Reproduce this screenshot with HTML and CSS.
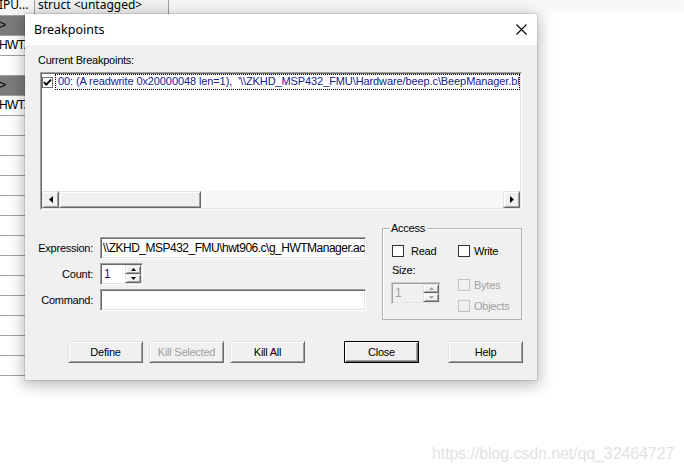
FILE: index.html
```html
<!DOCTYPE html>
<html>
<head>
<meta charset="utf-8">
<title>Breakpoints</title>
<link rel="stylesheet" href="styles.css">
</head>
<body>
<div class="bg">
  <div class="bg-head">
    <div class="hc hc1">IPU...</div>
    <div class="hc hc2">struct &lt;untagged&gt;</div>
    <div class="hc hc3"></div>
  </div>
  <div class="bg-rows">
    <div class="row dark"><span class="rt">&gt;</span></div>
    <div class="row"><span class="rt">HWT...</span></div>
    <div class="row"></div>
    <div class="row dark"><span class="rt">&gt;</span></div>
    <div class="row"><span class="rt">HWT...</span></div>
    <div class="row"></div>
    <div class="row"></div>
    <div class="row"></div>
    <div class="row"></div>
    <div class="row"></div>
    <div class="row"></div>
    <div class="row"></div>
    <div class="row"></div>
    <div class="row"></div>
    <div class="row"></div>
    <div class="row"></div>
    <div class="row"></div>
    <div class="row"></div>
  </div>
</div>

<div class="dialog">
  <div class="titlebar">
    <span class="title">Breakpoints</span>
    <svg class="close" width="11" height="11" viewBox="0 0 11 11"><path d="M0.5 0.5L10.5 10.5M10.5 0.5L0.5 10.5" stroke="#000" stroke-width="1.1" fill="none"/></svg>
  </div>
  <div class="dlg-body">
    <div class="lbl-current">Current Breakpoints:</div>
    <div class="listbox">
      <div class="lb-inner">
        <div class="list-area">
          <div class="item">
            <span class="chk"><svg width="9" height="9" viewBox="0 0 9 9"><path d="M1 4.2L3.3 6.6L8 1.6" stroke="#000" stroke-width="1.8" fill="none"/></svg></span>
            <span class="item-text">00: (A readwrite 0x20000048 len=1),  '\\ZKHD_MSP432_FMU\Hardware/beep.c\BeepManager.bFlag'</span>
          </div>
        </div>
        <div class="hscroll">
          <div class="sb-btn"><svg width="4" height="7" viewBox="0 0 4 7"><path d="M4 0V7L0 3.5Z" fill="#000"/></svg></div>
          <div class="sb-thumb"></div>
          <div class="sb-track"></div>
          <div class="sb-btn"><svg width="4" height="7" viewBox="0 0 4 7"><path d="M0 0V7L4 3.5Z" fill="#000"/></svg></div>
        </div>
      </div>
    </div>

    <div class="lower">
      <div class="form">
        <label class="flbl">Expression:</label>
        <div class="field"><span class="field-text">\\ZKHD_MSP432_FMU\hwt906.c\g_HWTManager.acc</span></div>
        <label class="flbl">Count:</label>
        <div class="spin count">
          <span class="spin-val">1</span>
          <div class="spin-btns">
            <div class="spin-b"><svg width="5" height="3" viewBox="0 0 5 3"><path d="M0 3H5L2.5 0Z" fill="#000"/></svg></div>
            <div class="spin-b"><svg width="5" height="3" viewBox="0 0 5 3"><path d="M0 0H5L2.5 3Z" fill="#000"/></svg></div>
          </div>
        </div>
        <label class="flbl">Command:</label>
        <div class="field"></div>
      </div>

      <fieldset class="access">
        <legend>Access</legend>
        <div class="acc-cols">
          <div class="acc-col col1">
            <div class="cbrow read"><span class="chk"></span>Read</div>
            <div class="size-lbl">Size:</div>
            <div class="spin size disabled">
              <span class="spin-val">1</span>
              <div class="spin-btns">
                <div class="spin-b"><svg width="5" height="3" viewBox="0 0 5 3"><path d="M0 3H5L2.5 0Z" fill="#a0a0a0"/></svg></div>
                <div class="spin-b"><svg width="5" height="3" viewBox="0 0 5 3"><path d="M0 0H5L2.5 3Z" fill="#a0a0a0"/></svg></div>
              </div>
            </div>
          </div>
          <div class="acc-col col2">
            <div class="cbrow"><span class="chk"></span>Write</div>
            <div class="cbrow dis bytes"><span class="chk"></span>Bytes</div>
            <div class="cbrow dis objects"><span class="chk"></span>Objects</div>
          </div>
        </div>
      </fieldset>
    </div>

    <div class="buttons">
      <div class="btn">Define</div>
      <div class="btn dis">Kill Selected</div>
      <div class="btn">Kill All</div>
      <div class="btn default close-btn">Close</div>
      <div class="btn help-btn">Help</div>
    </div>
  </div>
</div>

<div class="watermark">https://blog.csdn.net/qq_32464727</div>
</body>
</html>
```

FILE: styles.css
```css
* { box-sizing: border-box; }

body {
  margin: 0;
  width: 684px;
  height: 472px;
  background: #fff;
  position: relative;
  overflow: hidden;
  font-family: "Liberation Sans", Arial, sans-serif;
  color: #000;
}

/* background table */
.bg { width: 684px; }
.bg-head {
  display: flex;
  height: 16px;
  font-family: "Noto Sans", sans-serif;
  font-size: 12px;
  line-height: 12px;
}
.hc {
  height: 16px;
  white-space: nowrap;
  overflow: hidden;
}
.hc1 {
  width: 35px;
  background: #f7f7f7;
  border-right: 1px solid #a0a0a0;
  border-bottom: 1px solid #a0a0a0;
  text-indent: -1px;
  margin-top: -2px;
  height: 18px;
  padding-top: 1px;
}
.hc2 {
  width: 134px;
  background: #f2f2f2;
  border-right: 1px solid #a0a0a0;
  border-bottom: 1px solid #a0a0a0;
  padding-left: 3px;
  margin-top: -2px;
  height: 18px;
  padding-top: 1px;
}
.hc3 {
  flex: 1;
  background: linear-gradient(#f6f6f6, #fdfdfd);
}
.bg-rows { width: 168px; }
.row {
  height: 20px;
  border-bottom: 1px solid #a0a0a0;
  font-family: "Liberation Sans", sans-serif;
  font-size: 12px;
  letter-spacing: -0.6px;
  line-height: 19px;
  white-space: nowrap;
  overflow: hidden;
}
.row.dark { background: #7b7b7b; }
.rt { margin-left: -1px; }

/* dialog window */
.dialog {
  position: absolute;
  left: 25px;
  top: 14px;
  width: 512px;
  height: 366px;
  background: #f0f0f0;
  box-shadow: 0 0 0 1px rgba(0,0,0,0.10), 0 3px 14px 2px rgba(0,0,0,0.28);
  font-size: 11px;
  line-height: 12px;
  letter-spacing: -0.25px;
}
.titlebar {
  height: 31px;
  background: #fff;
  display: flex;
  align-items: center;
  justify-content: space-between;
  padding: 0 10px 0 9px;
  letter-spacing: 0;
}
.title {
  font-family: "Noto Sans", sans-serif;
  font-size: 12.5px;
  line-height: 16px;
  color: #000;
}
.close { display: block; }

.dlg-body { padding-top: 9px; }
.lbl-current {
  margin-left: 13px;
  height: 13px;
  line-height: 13px;
  color: #000;
}

.listbox {
  margin: 5px 0 0 15px;
  width: 482px;
  height: 138px;
  border: 1px solid;
  border-color: #a0a0a0 #fff #fff #a0a0a0;
}
.lb-inner {
  height: 100%;
  border: 1px solid;
  border-color: #696969 #e3e3e3 #e3e3e3 #696969;
  display: flex;
  flex-direction: column;
  background: #fff;
}
.list-area { flex: 1; background: #fff; }
.item {
  display: flex;
  align-items: center;
  height: 16px;
}
.chk {
  width: 11px;
  height: 11px;
  border: 1px solid #333;
  background: #fff;
  display: inline-flex;
  align-items: center;
  justify-content: center;
  flex: none;
}
.item .chk { border-color: #6f6f6f; margin-right: 2px; }
.item-text {
  flex: 1;
  height: 16px;
  border: 1px dotted #000;
  padding-left: 2px;
  line-height: 13px;
  white-space: pre;
  overflow: hidden;
  color: #14228e;
  letter-spacing: -0.1px;
}

.hscroll {
  height: 17px;
  display: flex;
}
.sb-btn, .sb-thumb, .spin-b, .btn {
  border: 1px solid;
  border-color: #e3e3e3 #696969 #696969 #e3e3e3;
  box-shadow: inset 1px 1px #fff, inset -1px -1px #a0a0a0;
  background: #f0f0f0;
}
.sb-btn {
  width: 17px;
  display: flex;
  align-items: center;
  justify-content: center;
}
.sb-thumb { width: 142px; }
.sb-track {
  flex: 1;
  background: repeating-conic-gradient(#f2f2f2 0 25%, #fdfdfd 0 50%) 0 0 / 2px 2px;
}

/* lower form */
.lower {
  display: flex;
  align-items: flex-start;
  margin-top: 12px;
}
.form {
  width: 357px;
  margin-top: 15px;
  display: grid;
  grid-template-columns: 68px 266px;
  grid-auto-rows: 22px;
  column-gap: 7px;
  row-gap: 4px;
  align-items: center;
}
.flbl { text-align: right; }
.field, .spin {
  height: 22px;
  background: #fff;
  border: 1px solid;
  border-color: #a0a0a0 #fff #fff #a0a0a0;
  box-shadow: inset 1px 1px #696969, inset -1px -1px #e3e3e3;
  overflow: hidden;
  white-space: nowrap;
}
.field { padding: 2px 0 0 2px; }
.field-text {
  font-size: 12px;
  line-height: 16px;
  letter-spacing: -0.5px;
}
.spin {
  display: flex;
  padding: 1px;
}
.spin.count { width: 43px; justify-self: start; }
.spin-val {
  flex: 1;
  font-size: 12px;
  line-height: 18px;
  padding-left: 2px;
  color: #3d1060;
}
.spin-btns {
  width: 16px;
  display: flex;
  flex-direction: column;
}
.spin-b {
  flex: 1;
  display: flex;
  align-items: center;
  justify-content: center;
}
.spin-b svg { display: block; }

/* access group */
.access {
  width: 140px;
  margin: 0;
  padding: 0;
  border: 1px solid #b4b4b4;
  box-shadow: inset 1px 1px #fff;
}
.access legend {
  margin-left: 6px;
  padding: 0 2px;
  font-size: 11px;
  line-height: 12px;
}
.acc-cols {
  display: flex;
  padding: 11px 0 7px 9px;
}
.col1 { width: 66px; }
.cbrow {
  display: flex;
  align-items: center;
  height: 12px;
  line-height: 12px;
}
.cbrow .chk { width: 12px; height: 12px; margin-right: 4px; }
.cbrow.read .chk { margin-right: 7px; }
.cbrow.dis { color: #a0a0a0; }
.cbrow.dis .chk { border-color: #c3c3c3; background: #f0f0f0; }
.size-lbl { margin-top: 7px; height: 12px; }
.spin.size {
  margin-top: 6px;
  margin-left: -1px;
  width: 50px;
}
.spin.disabled {
  background: #f0f0f0;
  border-color: #c8c8c8 #f0f0f0 #f0f0f0 #c8c8c8;
  box-shadow: inset 1px 1px #a0a0a0, inset -1px -1px #e3e3e3;
}
.spin.disabled .spin-val { color: #a0a0a0; }
.bytes { margin-top: 22px; }
.objects { margin-top: 9px; }

/* buttons */
.buttons {
  display: flex;
  margin-top: 21px;
  padding-left: 43px;
  gap: 6px;
}
.btn {
  width: 75px;
  height: 22px;
  display: flex;
  align-items: center;
  justify-content: center;
  font-size: 11px;
  padding-bottom: 1px;
}
.btn.dis { color: #a0a0a0; }
.btn.default {
  border-color: #000;
  box-shadow: inset 1px 1px #fff, inset -1px -1px #696969, inset -2px -2px #a0a0a0;
}
.close-btn { margin-left: 33px; }
.help-btn { margin-left: 23px; }

.watermark {
  position: absolute;
  left: 432px;
  top: 445px;
  font-family: "Liberation Sans", Arial, sans-serif;
  font-size: 16px;
  line-height: 18px;
  letter-spacing: -0.1px;
  color: #e2e2e2;
  white-space: nowrap;
}
```
